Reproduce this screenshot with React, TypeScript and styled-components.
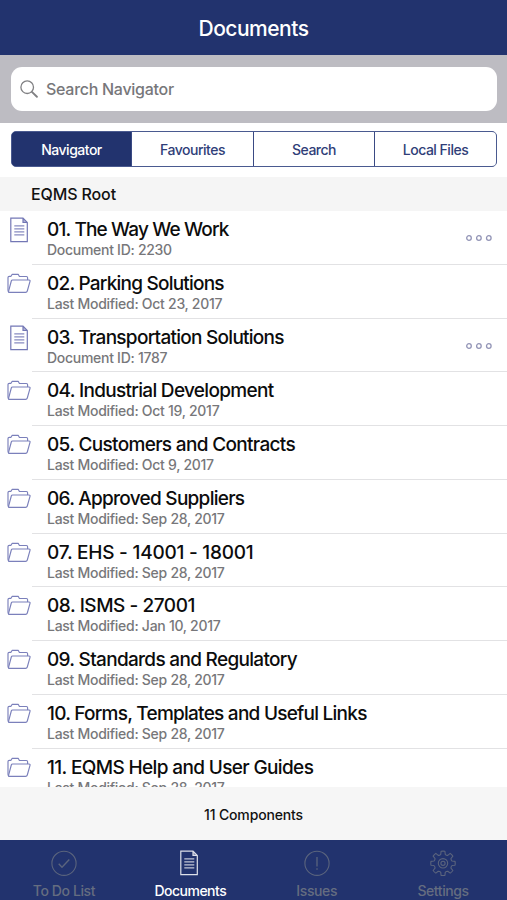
import React from "react";
import styled, { createGlobalStyle } from "styled-components";

const NAVY = "#22336e";

const GlobalStyle = createGlobalStyle`
  * { box-sizing: border-box; }
  body { margin: 0; background: #fff; font-family: Inter, "Liberation Sans", sans-serif; }
`;

const Screen = styled.div`
  width: 507px;
  height: 900px;
  display: flex;
  flex-direction: column;
  overflow: hidden;
  background: #fff;
`;

const Header = styled.header`
  flex: none;
  height: 55px;
  background: ${NAVY};
  color: #fff;
  text-align: center;
  font-size: 21px;
  font-weight: 450;
  line-height: 57px;
  letter-spacing: -0.5px;
`;

const SearchBar = styled.div`
  flex: none;
  height: 68px;
  padding: 12px 10px 12px 11px;
  background: #bdbcc2;
`;

const SearchField = styled.div`
  height: 44px;
  padding-left: 9px;
  display: flex;
  align-items: center;
  gap: 8px;
  border-radius: 11px;
  background: #fff;
  color: #77777a;
  font-size: 16px;
  font-weight: 450;
  line-height: 20px;
  letter-spacing: -0.28px;
  span { margin-top: -1px; }
`;

const TabsArea = styled.div`
  flex: none;
  height: 54px;
  padding: 8px 10px 10px 11px;
`;

const Segments = styled.div`
  height: 36px;
  display: grid;
  grid-template-columns: 119px 122px 121px 1fr;
  border: 1px solid #4a5a90;
  border-radius: 5px;
  overflow: hidden;
  background: ${NAVY};
`;

const Segment = styled.button<{ $active?: boolean }>`
  border: 0;
  padding: 0;
  font: 500 14px Inter, sans-serif;
  letter-spacing: -0.5px;
  color: ${(p) => (p.$active ? "#fff" : "#2f3e78")};
  background: ${(p) => (p.$active ? NAVY : "#fff")};
  & + & { border-left: 1px solid #3a4a84; }
`;

const SectionTitle = styled.div`
  flex: none;
  height: 34px;
  padding-left: 31px;
  background: #f5f5f5;
  color: #111;
  font-size: 16px;
  font-weight: 450;
  line-height: 35px;
  letter-spacing: -0.12px;
`;

const List = styled.main`
  flex: none;
  height: 575.5px;
  overflow: hidden;
`;

const Row = styled.div`
  height: 53.75px;
  display: flex;
`;

const IconCell = styled.div`
  width: 32px;
  padding: 6px 0 0 7px;
`;

const RowBody = styled.div`
  flex: 1;
  display: flex;
  justify-content: space-between;
  padding: 7px 15px 0 15px;
  border-bottom: 1px solid #e2e2e4;
`;

const RowTitle = styled.div<{ $spacing: number }>`
  font-size: 19px;
  font-weight: 500;
  line-height: 24px;
  letter-spacing: ${(p) => p.$spacing}px;
  color: #0c0c0c;
  white-space: nowrap;
`;

const RowMeta = styled.div`
  margin-top: -1px;
  font-size: 14px;
  font-weight: 450;
  line-height: 17px;
  letter-spacing: -0.28px;
  color: #77777a;
  white-space: nowrap;
`;

const MoreButton = styled.div`
  margin-top: 16px;
  height: 8px;
  display: flex;
`;

const Footer = styled.div`
  flex: none;
  height: 53.5px;
  background: #f6f6f6;
  text-align: center;
  color: #111;
  font-size: 14px;
  font-weight: 500;
  line-height: 55px;
  letter-spacing: -0.15px;
`;

const TabBar = styled.nav`
  flex: none;
  height: 60px;
  padding-top: 10px;
  display: grid;
  grid-template-columns: repeat(4, 126.4px);
  justify-content: center;
  background: ${NAVY};
`;

const TabItem = styled.div<{ $active?: boolean }>`
  display: flex;
  flex-direction: column;
  align-items: center;
  gap: 4px;
  color: ${(p) => (p.$active ? "#fff" : "#656d80")};
  font-size: 14px;
  font-weight: 500;
  line-height: 21px;
  letter-spacing: ${(p) => (p.$active ? "-0.5px" : "-0.4px")};
  svg { opacity: 0.85; }
`;

const DocIcon = ({ color = "#7377b5" }: { color?: string }) => (
  <svg width="26" height="26" viewBox="0.7 0.3 26 26" fill="none" stroke={color} strokeWidth="1.2">
    <path d="M4.5 1.5h12.2l4.3 4.3V25H4.5z M16.7 1.5v4.3H21" />
    <path d="M8 9.2h10M8 12.2h10M8 15.2h10M8 18.2h10" strokeOpacity=".85" />
    <path d="M16.7 2l4 3.8h-4z" fill={color} fillOpacity=".55" stroke="none" />
  </svg>
);

const FolderIcon = () => (
  <svg width="25" height="26" viewBox="0 0 25 26" fill="none" stroke="#7b80bb" strokeWidth="1.15" strokeLinejoin="round">
    <path d="M2 20.900Q1 20.500 1 19.200V6.500Q1 5.300 2.200 5.300H4l1.200-2h6l1.200 2.200h7Q20.600 5.500 20.600 6.800V9" />
    <path d="M5.600 9H22q1.400 0 1 1.300l-2.700 9.700q-.4 1.400-1.700 1.400H2.500q-1.300 0-.9-1.300L4.300 10q.3-1 1.300-1z" />
  </svg>
);

const DotsIcon = () => (
  <svg width="26" height="8" viewBox="0 0 26 8" fill="none" stroke="#9294b6" strokeWidth="1.3">
    <circle cx="3" cy="4" r="2.300" />
    <circle cx="12.900" cy="4" r="2.300" />
    <circle cx="22.800" cy="4" r="2.300" />
  </svg>
);

const SearchIcon = () => (
  <svg width="18" height="18" viewBox="0 0 18 18" fill="none" stroke="#808083" strokeLinecap="round">
    <circle cx="7.200" cy="7.200" r="6.300" strokeWidth="1.3" />
    <path d="M11.900 11.900l5 4.900" strokeWidth="1.900" />
  </svg>
);

const CheckIcon = () => (
  <svg width="26" height="26" viewBox="0 0 26 26" fill="none" stroke="currentColor" strokeWidth="1.1">
    <circle cx="13" cy="13.300" r="12.100" />
    <path d="M7.700 13.800l3.300 3.500 7.300-7.800" strokeWidth="1.400" />
  </svg>
);

const AlertIcon = () => (
  <svg width="26" height="26" viewBox="0 0 26 26" fill="none" stroke="currentColor" strokeWidth="1.1">
    <circle cx="13" cy="13.300" r="12.100" />
    <path d="M13 7v9.500M13 18.300v1.500" strokeWidth="1.300" />
  </svg>
);

const gearOutline = Array.from({ length: 8 }, (_, tooth) => {
  const point = (radius: number, degrees: number) => {
    const a = ((tooth * 45 + degrees - 90) * Math.PI) / 180;
    return `${(13 + radius * Math.cos(a)).toFixed(2)} ${(13.3 + radius * Math.sin(a)).toFixed(2)}`;
  };
  return `${tooth ? "L" : "M"}${point(9.3, -14)}L${point(12.2, -9)}A12.2 12.2 0 0 1 ${point(12.2, 9)}L${point(9.3, 14)}Q${point(8.5, 22.5)} ${point(9.3, 31)}`;
}).join("");

const GearIcon = () => (
  <svg width="26" height="26" viewBox="0 0 26 26" fill="none" stroke="currentColor" strokeWidth="1.1" strokeLinejoin="round">
    <path d={gearOutline + "Z"} />
    <circle cx="13" cy="13.300" r="4.700" />
    <circle cx="13" cy="13.300" r="2.100" />
  </svg>
);

const rows: { title: string; meta: string; doc?: boolean; spacing: number }[] = [
  { title: "01. The Way We Work", meta: "Document ID: 2230", doc: true, spacing: -0.84 },
  { title: "02. Parking Solutions", meta: "Last Modified: Oct 23, 2017", spacing: -0.78 },
  { title: "03. Transportation Solutions", meta: "Document ID: 1787", doc: true, spacing: -0.73 },
  { title: "04. Industrial Development", meta: "Last Modified: Oct 19, 2017", spacing: -0.69 },
  { title: "05. Customers and Contracts", meta: "Last Modified: Oct 9, 2017", spacing: -0.67 },
  { title: "06. Approved Suppliers", meta: "Last Modified: Sep 28, 2017", spacing: -0.73 },
  { title: "07. EHS - 14001 - 18001", meta: "Last Modified: Sep 28, 2017", spacing: -0.23 },
  { title: "08. ISMS - 27001", meta: "Last Modified: Jan 10, 2017", spacing: -0.45 },
  { title: "09. Standards and Regulatory", meta: "Last Modified: Sep 28, 2017", spacing: -0.69 },
  { title: "10. Forms, Templates and Useful Links", meta: "Last Modified: Sep 28, 2017", spacing: -0.75 },
  { title: "11. EQMS Help and User Guides", meta: "Last Modified: Sep 28, 2017", spacing: -0.63 },
];

export default function App() {
  return (
    <Screen>
      <GlobalStyle />
      <Header>Documents</Header>
      <SearchBar>
        <SearchField>
          <SearchIcon />
          <span>Search Navigator</span>
        </SearchField>
      </SearchBar>
      <TabsArea>
        <Segments>
          <Segment $active>Navigator</Segment>
          <Segment>Favourites</Segment>
          <Segment>Search</Segment>
          <Segment>Local Files</Segment>
        </Segments>
      </TabsArea>
      <SectionTitle>EQMS Root</SectionTitle>
      <List>
        {rows.map((row) => (
          <Row key={row.title}>
            <IconCell>{row.doc ? <DocIcon /> : <FolderIcon />}</IconCell>
            <RowBody>
              <div>
                <RowTitle $spacing={row.spacing}>{row.title}</RowTitle>
                <RowMeta>{row.meta}</RowMeta>
              </div>
              {row.doc && (
                <MoreButton>
                  <DotsIcon />
                </MoreButton>
              )}
            </RowBody>
          </Row>
        ))}
      </List>
      <Footer>11 Components</Footer>
      <TabBar>
        <TabItem>
          <CheckIcon />
          To Do List
        </TabItem>
        <TabItem $active>
          <DocIcon color="#fff" />
          Documents
        </TabItem>
        <TabItem>
          <AlertIcon />
          Issues
        </TabItem>
        <TabItem>
          <GearIcon />
          Settings
        </TabItem>
      </TabBar>
    </Screen>
  );
}
